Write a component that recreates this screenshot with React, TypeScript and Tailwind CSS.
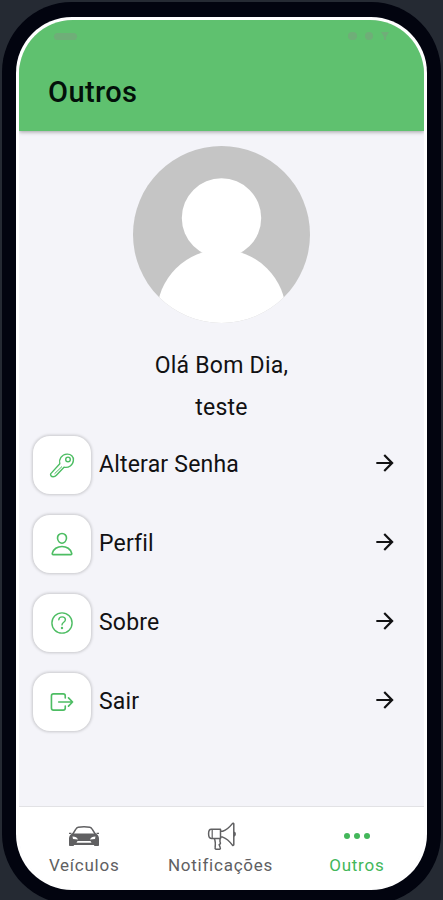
import type { ReactNode } from "react"
import { IoEllipsisHorizontal, IoExitOutline, IoPersonOutline } from "react-icons/io5"
import { MdArrowForward } from "react-icons/md"

const IconKey = () => (
  <svg viewBox="0 0 26 26" className="size-[26px] fill-none stroke-current" strokeWidth="1.4" strokeLinejoin="round">
    <path d="M10.800 11.800C9.600 7.500 12.600 2.400 18 2.100c4-.2 6.700 2.600 6.400 6.100-.3 5-4.800 8-9.400 7L7.400 23.200c-.9 1-2.200 1.500-3.300 1.500-1.900 0-3.100-1.500-2.300-3.100z" />
    <path d="M13 14.500 5.500 21.800" strokeWidth="1" />
    <circle cx="19" cy="7.400" r="2.300" />
  </svg>
)

const IconHelp = () => (
  <svg viewBox="0 0 26 26" className="size-[26px] fill-none stroke-current" strokeWidth="1.4" strokeLinecap="round">
    <circle cx="13" cy="13" r="10.100" />
    <path d="M9.800 9.800c.1-2 1.500-2.900 3.300-2.900 1.900 0 3.300 1.100 3.300 2.800 0 2.500-3.400 2.500-3.400 5.200" />
    <circle cx="13" cy="18" r=".5" fill="currentColor" />
  </svg>
)

const IconCar = () => (
  <svg viewBox="0 0 32 30" className="h-[30px] w-8 fill-none stroke-current" strokeWidth="1.500" strokeLinejoin="round">
    <path d="M4.500 13.500 8 7.800C8.500 6.900 9.200 6.500 10.200 6.300c4-.6 7.600-.6 11.600 0 1 .2 1.700.6 2.200 1.500l3.500 5.700" />
    <path
      fillRule="evenodd"
      stroke="none"
      fill="currentColor"
      d="M4.500 12.500h23c2.300 1 3.500 2.500 3.500 5.300v6.400c0 .5-.3.800-.8.800h-3.400c-.5 0-.8-.3-.8-.8V24H6v.2c0 .5-.3.800-.8.800H1.800c-.5 0-.8-.3-.8-.8v-6.400c0-2.800 1.200-4.300 3.500-5.300zm0 3 .5 2.500 5 .4c-.8-1.900-2.500-2.700-5.500-2.900zm23 0c-3 .2-4.700 1-5.500 2.900l5-.4zM9.500 20l-1 1.800h15l-1-1.800z"
    />
    <path d="M1 12.400h2.500M28.500 12.400H31" strokeWidth="1.200" />
  </svg>
)

const IconMegaphone = () => (
  <svg viewBox="0 0 30 30" className="ml-[3px] size-[30px] fill-none stroke-current" strokeWidth="1.500" strokeLinejoin="round">
    <path d="M13.500 8.300H4.200C2.600 8.300 1.600 9.600 1.600 12.800s1 4.600 2.600 4.600h9.300z" />
    <path d="M5.200 8.300v9.100" strokeWidth="1.200" />
    <path d="M13.500 10.300h2.200c4.500-1.700 7.300-4.700 9.700-7.700.6-.6 1.400-.3 1.400.5v20.500c0 .8-.8 1.100-1.400.5-2.400-3.200-5.200-6.300-9.700-8h-2.200M27.200 11.200c1.300.6 1.300 3.200 0 3.800" />
    <path d="M7.300 17.400c1.300 2.700 1.200 6 .8 9.500-.1.700.3 1.300 1 1.300h3.400c.7 0 1.100-.8.800-1.400l-1.200-3.200c1.500-.3 1.700-1.600.9-2.700v-3.500" />
  </svg>
)

const options = [
  { label: "Alterar Senha", icon: <IconKey /> },
  { label: "Perfil", icon: <IoPersonOutline /> },
  { label: "Sobre", icon: <IconHelp /> },
  { label: "Sair", icon: <IoExitOutline /> },
]

const Header = () => (
  <header className="relative z-10 h-[111px] shrink-0 bg-[#5fc16f] px-[30px] shadow-[0_1px_4px_rgba(0,0,0,0.35)]">
    <div className="flex h-8 items-center justify-between pl-[5px] pr-[5px]">
      <span className="h-[7px] w-[23px] rounded-full bg-[#6fae78]" />
      <div className="flex items-center gap-2">
        <span className="h-2 w-[9px] rounded-sm bg-[#6fae78]" />
        <span className="h-2 w-2 rounded-full bg-[#6fae78]" />
        <svg viewBox="0 0 8 8" className="size-2 fill-[#6fae78]">
          <path d="M0 0h8L5 5v3H3V5z" />
        </svg>
      </div>
    </div>
    <h1 className="mt-[21px] -ml-px text-[29px] leading-[38px] font-medium tracking-[0.4px] text-[#03100a]">Outros</h1>
  </header>
)

const Avatar = () => (
  <svg viewBox="0 0 177 177" className="size-[177px]">
    <defs>
      <clipPath id="avatar">
        <circle cx="88.5" cy="88.5" r="88.5" />
      </clipPath>
    </defs>
    <g clipPath="url(#avatar)">
      <rect width="177" height="177" fill="#c5c5c5" />
      <circle cx="88.5" cy="72" r="39.7" fill="#fff" />
      <circle cx="88.5" cy="168" r="64.5" fill="#fff" />
    </g>
  </svg>
)

const Option = ({ label, icon }: { label: string; icon: ReactNode }) => (
  <li className="flex h-[59px] items-center">
    <span className="flex size-[58px] items-center justify-center rounded-[17px] bg-white text-[26px] text-[#4dbd63] shadow-[0_0_3px_1px_rgba(0,0,0,0.18)]">
      {icon}
    </span>
    <span className="ml-2 flex-1 pt-0.5 text-[23px] tracking-[0.2px] text-[#111113]">{label}</span>
    <MdArrowForward className="mb-[3px] text-[26px] text-[#111113]" />
  </li>
)

const Tab = ({ label, icon, active }: { label: string; icon: ReactNode; active?: boolean }) => (
  <li className={`flex flex-1 flex-col items-center ${active ? "text-[#43b75a]" : "text-[#606062]"}`}>
    <span className="flex h-[30px] items-center text-[32px]">{icon}</span>
    <span className="mt-[3px] text-[17px] leading-[22px] tracking-[0.75px]">{label}</span>
  </li>
)

export default function App() {
  return (
    <div className="h-[900px] w-[443px] overflow-hidden bg-[#252a33] px-[2px] pt-[2px] font-[Roboto,sans-serif]">
      <div className="h-[902px] rounded-[70px] bg-[#02040f] px-[14px] pt-[15px]">
        <div className="h-[873px] rounded-[56px] bg-white px-[3px] pt-[3px] pb-[1px]">
          <div className="flex h-full flex-col overflow-hidden rounded-[54px] bg-[#f4f4f9]">
            <Header />
            <main className="flex flex-1 flex-col items-center pt-[15px]">
              <Avatar />
              <p className="mt-[26px] text-[23px] leading-[34px] tracking-[0.25px] text-[#111113]">Olá Bom Dia,</p>
              <p className="mt-[8px] text-[23px] leading-[34px] tracking-[0.25px] text-[#111113]">teste</p>
              <ul className="mt-[10px] flex w-full flex-col gap-5 pl-[14px] pr-[26px]">
                {options.map((option) => (
                  <Option key={option.label} {...option} />
                ))}
              </ul>
            </main>
            <nav className="h-[83px] shrink-0 border-t border-[#e2e2e5] bg-white">
              <ul className="-mr-px -ml-[3px] flex pt-[14px]">
                <Tab label="Veículos" icon={<IconCar />} />
                <Tab label="Notificações" icon={<IconMegaphone />} />
                <Tab label="Outros" icon={<IoEllipsisHorizontal />} active />
              </ul>
            </nav>
          </div>
        </div>
      </div>
    </div>
  )
}
